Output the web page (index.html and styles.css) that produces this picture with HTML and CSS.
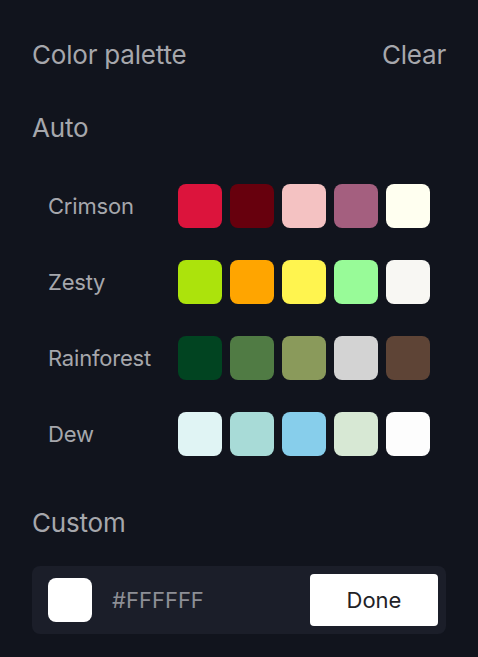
FILE: index.html
```html
<!DOCTYPE html>
<html>
<head>
<meta charset="utf-8">
<link rel="stylesheet" href="styles.css">
</head>
<body>
<div class="panel">
  <div class="header">
    <span class="title">Color palette</span>
    <span class="clear">Clear</span>
  </div>
  <div class="section-title">Auto</div>
  <div class="palettes">
    <div class="row">
      <span class="label">Crimson</span>
      <div class="swatches">
        <span class="sw" style="background:#dc143c"></span>
        <span class="sw" style="background:#67000d"></span>
        <span class="sw" style="background:#f4c2c2"></span>
        <span class="sw" style="background:#a45f7f"></span>
        <span class="sw" style="background:#fffff0"></span>
      </div>
    </div>
    <div class="row">
      <span class="label">Zesty</span>
      <div class="swatches">
        <span class="sw" style="background:#ace30c"></span>
        <span class="sw" style="background:#ffa500"></span>
        <span class="sw" style="background:#fff44f"></span>
        <span class="sw" style="background:#98fb98"></span>
        <span class="sw" style="background:#f8f7f3"></span>
      </div>
    </div>
    <div class="row">
      <span class="label">Rainforest</span>
      <div class="swatches">
        <span class="sw" style="background:#014421"></span>
        <span class="sw" style="background:#507b44"></span>
        <span class="sw" style="background:#8a9a5b"></span>
        <span class="sw" style="background:#d3d3d3"></span>
        <span class="sw" style="background:#5e4436"></span>
      </div>
    </div>
    <div class="row">
      <span class="label">Dew</span>
      <div class="swatches">
        <span class="sw" style="background:#e0f4f4"></span>
        <span class="sw" style="background:#a8dbd7"></span>
        <span class="sw" style="background:#87ceeb"></span>
        <span class="sw" style="background:#d7e8d4"></span>
        <span class="sw" style="background:#fdfdfd"></span>
      </div>
    </div>
  </div>
  <div class="section-title custom-title">Custom</div>
  <div class="custom">
    <span class="custom-sw"></span>
    <span class="hex">#FFFFFF</span>
    <button class="done">Done</button>
  </div>
</div>
</body>
</html>
```
FILE: styles.css
```css
html, body {
  margin: 0;
  padding: 0;
  background: #11141d;
}
body {
  font-family: Inter, "Noto Sans", sans-serif;
  color: #a6a7ac;
}
.panel {
  padding: 32px 32px 0 32px;
}
.header {
  display: flex;
  justify-content: space-between;
  align-items: center;
  height: 44px;
  font-size: 26px;
  letter-spacing: -0.2px;
}
.section-title {
  font-size: 26px;
  letter-spacing: -0.2px;
  margin-top: 34px;
  height: 36px;
  line-height: 36px;
}
.palettes {
  display: flex;
  flex-direction: column;
  gap: 32px;
  margin-top: 38px;
}
.row {
  display: flex;
  align-items: center;
  padding-left: 16px;
}
.label {
  width: 130px;
  font-size: 22px;
  letter-spacing: -0.2px;
}
.swatches {
  display: flex;
  gap: 8px;
}
.sw {
  width: 44px;
  height: 44px;
  border-radius: 8px;
  display: block;
}
.custom-title {
  margin-top: 49px;
}
.custom {
  margin-top: 25px;
  background: #1b1e29;
  border-radius: 8px;
  height: 68px;
  display: flex;
  align-items: center;
  padding: 0 8px 0 16px;
}
.custom-sw {
  width: 44px;
  height: 44px;
  border-radius: 8px;
  background: #ffffff;
  display: block;
}
.hex {
  margin-left: 20px;
  font-size: 22px;
  color: #8d8f96;
  flex: 1;
}
.done {
  width: 128px;
  height: 52px;
  border: none;
  border-radius: 4px;
  background: #ffffff;
  color: #222226;
  font-family: Inter, "Noto Sans", sans-serif;
  font-size: 22px;
  padding: 0;
}
```
